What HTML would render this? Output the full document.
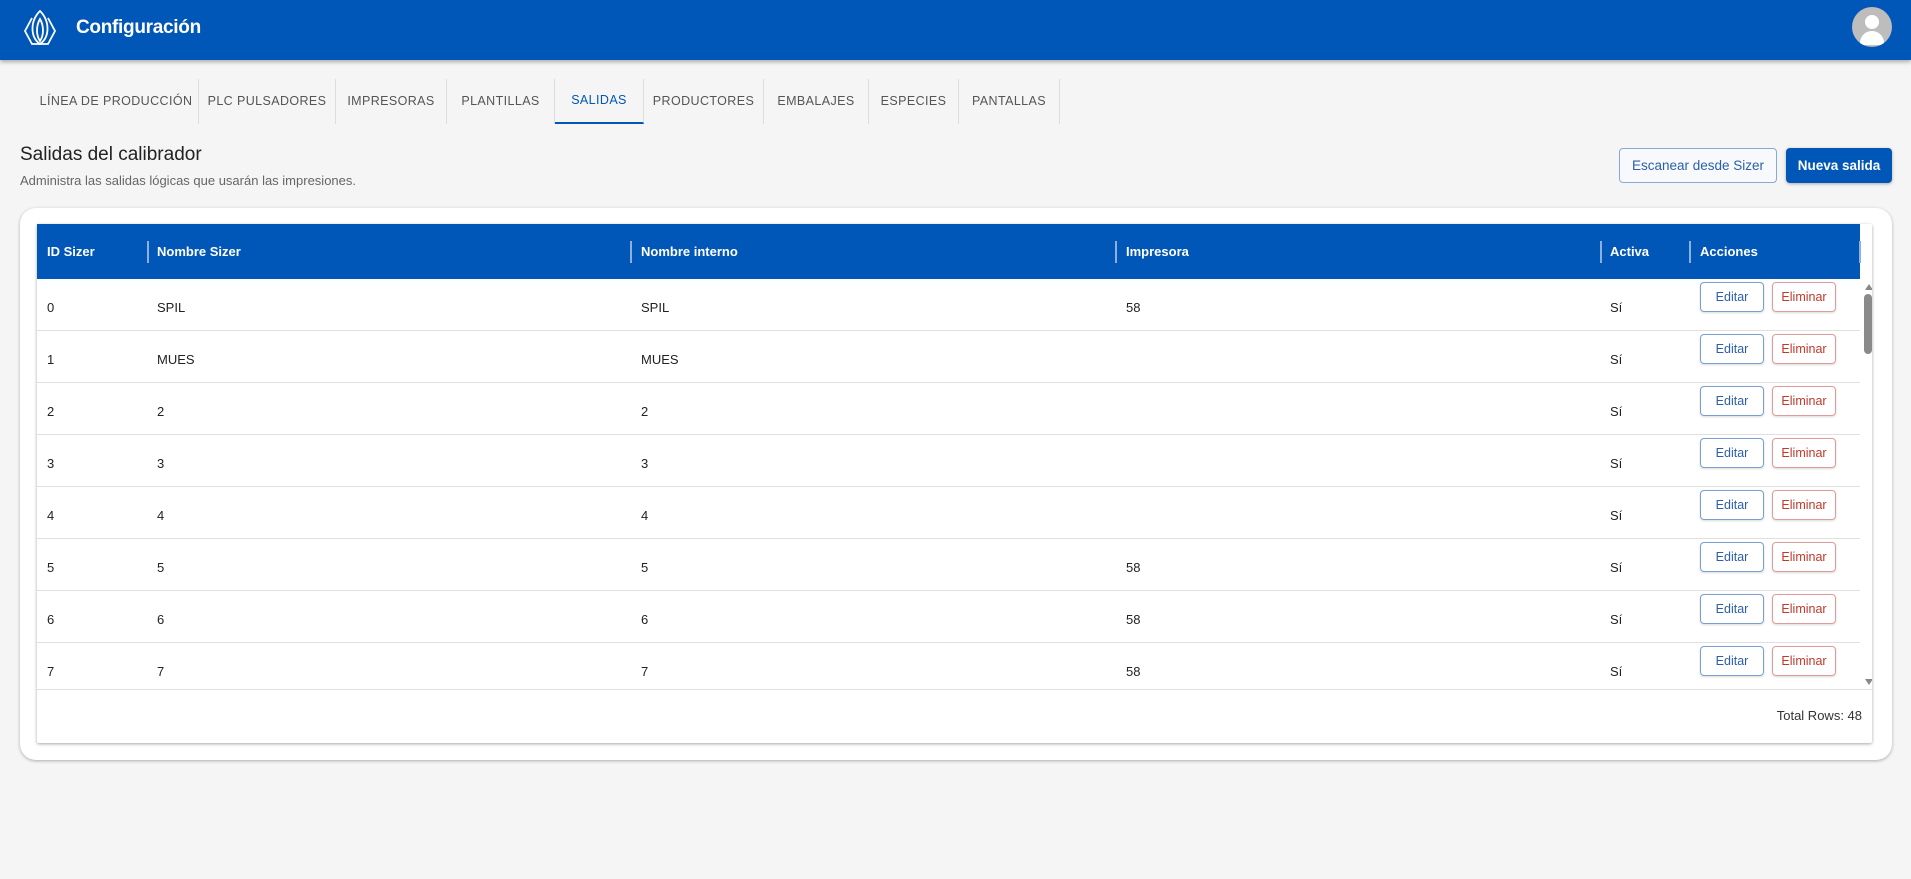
<!DOCTYPE html>
<html><head><meta charset="utf-8"><style>
*{box-sizing:border-box;margin:0;padding:0}
body{width:1911px;height:879px;background:#f5f5f5;font-family:"Liberation Sans",sans-serif;position:relative;overflow:hidden;color:#222}
.hdr{position:absolute;left:0;top:0;width:1911px;height:60px;background:#0057b8;box-shadow:0 2px 4px rgba(0,0,0,.3)}
.hdr .t{position:absolute;left:76px;top:17px;color:#fff;font-size:19px;font-weight:bold;letter-spacing:-.3px}
.av{position:absolute;left:1852px;top:7px;width:40px;height:40px;border-radius:50%;background:#bdbdbd;overflow:hidden}
.tabs{position:absolute;left:34px;top:79px;height:45px;display:flex}
.tab{height:45px;border-right:1px solid #ddd;font-size:12.5px;color:#555;letter-spacing:.4px;display:flex;align-items:center;justify-content:center;padding-bottom:2px}
.tab.a{color:#0057b8;border-bottom:2px solid #0057b8}
.h1{position:absolute;left:20px;top:144px;font-size:19px;color:#222}
.sub{position:absolute;left:20px;top:173px;font-size:13px;color:#666}
.btn{position:absolute;top:148px;height:35px;border-radius:4px;font-size:13.5px;display:flex;align-items:center;justify-content:center}
.card{position:absolute;left:20px;top:208px;width:1872px;height:552px;background:#fff;border-radius:16px;box-shadow:0 1px 3px rgba(0,0,0,.3)}
.tbl{position:absolute;left:37px;top:224px;width:1835px;height:519px;background:#fff;box-shadow:0 1px 3px rgba(0,0,0,.35);border-radius:2px}
.th{position:absolute;left:0;top:0;width:1823px;height:55px;background:#0057b8;color:#fff;font-size:13px;font-weight:bold}
.th span{position:absolute;top:20px}
.th i{position:absolute;top:17px;width:2px;height:22px;background:#8fb0dc}
.row{position:absolute;left:0;width:1823px;height:52px;border-bottom:1px solid #e0e0e0;font-size:13px}
.row span{position:absolute;top:21px}
.b{position:absolute;top:3px;height:30px;width:64px;border-radius:4px;font-size:12.5px;display:flex;align-items:center;justify-content:center;box-shadow:0 1px 2px rgba(0,0,0,.15)}
.e{left:1663px;border:1px solid #7a9fd4;color:#2d5fa8}
.d{left:1735px;border:1px solid #e09a9a;color:#c0392b}
</style></head><body>
<div class="hdr">
<svg style="position:absolute;left:22px;top:9px" width="36" height="38" viewBox="0 0 36 38" fill="none" stroke="#fff" stroke-width="1.8"><path d="M10 9 L3 22 L10 35 L26 35 L33 22 L26 9"/><path d="M18 2 C8 12 8 28 18 35 C28 28 28 12 18 2Z"/><path d="M18 10 C14 17 14 26 18 32 C22 26 22 17 18 10Z"/></svg>
<div class="t">Configuración</div>
<div class="av"><div style="position:absolute;left:13px;top:8px;width:14px;height:14px;border-radius:50%;background:#fff"></div><div style="position:absolute;left:8px;top:24px;width:24px;height:14px;border-radius:12px 12px 0 0;background:#fff"></div></div>
</div>
<div class="tabs">
<div class="tab" style="width:165px">LÍNEA DE PRODUCCIÓN</div>
<div class="tab" style="width:137px">PLC PULSADORES</div>
<div class="tab" style="width:111px">IMPRESORAS</div>
<div class="tab" style="width:108px">PLANTILLAS</div>
<div class="tab a" style="width:89px">SALIDAS</div>
<div class="tab" style="width:120px">PRODUCTORES</div>
<div class="tab" style="width:105px">EMBALAJES</div>
<div class="tab" style="width:90px">ESPECIES</div>
<div class="tab" style="width:101px">PANTALLAS</div>
</div>
<div class="h1">Salidas del calibrador</div>
<div class="sub">Administra las salidas lógicas que usarán las impresiones.</div>
<div class="btn" style="left:1619px;width:158px;border:1px solid #8aa8d4;color:#2d5fa8;background:#f7f9fc">Escanear desde Sizer</div>
<div class="btn" style="left:1786px;width:106px;background:#0057b8;color:#fff;font-weight:bold;box-shadow:0 1px 3px rgba(0,0,0,.3)">Nueva salida</div>
<div class="card"></div>
<div class="tbl">
<div class="th">
<span style="left:10px">ID Sizer</span><i style="left:110px"></i>
<span style="left:120px">Nombre Sizer</span><i style="left:593px"></i>
<span style="left:604px">Nombre interno</span><i style="left:1078px"></i>
<span style="left:1089px">Impresora</span><i style="left:1563px"></i>
<span style="left:1573px">Activa</span><i style="left:1652px"></i>
<span style="left:1663px">Acciones</span><i style="left:1822px"></i>
</div>
<div style="position:absolute;left:0;top:55px;width:1835px;height:411px;overflow:hidden;border-bottom:1px solid #e0e0e0">
<div class="row" style="top:0"><span style="left:10px">0</span><span style="left:120px">SPIL</span><span style="left:604px">SPIL</span><span style="left:1089px">58</span><span style="left:1573px">Sí</span><div class="b e">Editar</div><div class="b d">Eliminar</div></div>
<div class="row" style="top:52px"><span style="left:10px">1</span><span style="left:120px">MUES</span><span style="left:604px">MUES</span><span style="left:1573px">Sí</span><div class="b e">Editar</div><div class="b d">Eliminar</div></div>
<div class="row" style="top:104px"><span style="left:10px">2</span><span style="left:120px">2</span><span style="left:604px">2</span><span style="left:1573px">Sí</span><div class="b e">Editar</div><div class="b d">Eliminar</div></div>
<div class="row" style="top:156px"><span style="left:10px">3</span><span style="left:120px">3</span><span style="left:604px">3</span><span style="left:1573px">Sí</span><div class="b e">Editar</div><div class="b d">Eliminar</div></div>
<div class="row" style="top:208px"><span style="left:10px">4</span><span style="left:120px">4</span><span style="left:604px">4</span><span style="left:1573px">Sí</span><div class="b e">Editar</div><div class="b d">Eliminar</div></div>
<div class="row" style="top:260px"><span style="left:10px">5</span><span style="left:120px">5</span><span style="left:604px">5</span><span style="left:1089px">58</span><span style="left:1573px">Sí</span><div class="b e">Editar</div><div class="b d">Eliminar</div></div>
<div class="row" style="top:312px"><span style="left:10px">6</span><span style="left:120px">6</span><span style="left:604px">6</span><span style="left:1089px">58</span><span style="left:1573px">Sí</span><div class="b e">Editar</div><div class="b d">Eliminar</div></div>
<div class="row" style="top:364px;border-bottom:none"><span style="left:10px">7</span><span style="left:120px">7</span><span style="left:604px">7</span><span style="left:1089px">58</span><span style="left:1573px">Sí</span><div class="b e">Editar</div><div class="b d">Eliminar</div></div>
<div style="position:absolute;left:1828px;top:5px;width:0;height:0;border-left:4px solid transparent;border-right:4px solid transparent;border-bottom:6px solid #888"></div>
<div style="position:absolute;left:1827px;top:15px;width:8px;height:60px;border-radius:4px;background:#8a8a8a"></div>
<div style="position:absolute;left:1828px;top:400px;width:0;height:0;border-left:4px solid transparent;border-right:4px solid transparent;border-top:6px solid #888"></div>
</div>
<div style="position:absolute;right:10px;top:484px;font-size:13px;color:#333">Total Rows: 48</div>
</div>
</body></html>
